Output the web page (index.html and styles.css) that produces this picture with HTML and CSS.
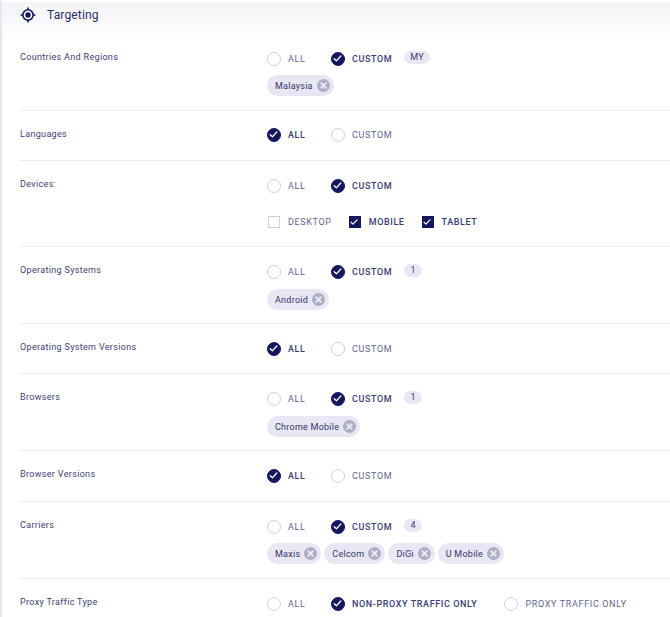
FILE: index.html
```html
<!DOCTYPE html>
<html lang="en">
<head>
<meta charset="utf-8">
<title>Targeting</title>
<link rel="stylesheet" href="styles.css">
</head>
<body>
<svg class="defs" width="0" height="0" aria-hidden="true">
  <symbol id="chk" viewBox="0 0 14 14"><path d="M2.8 7.4 5.6 10 11.2 3.9" fill="none" stroke="#fff" stroke-width="1.7" stroke-linecap="round" stroke-linejoin="round"/></symbol>
  <symbol id="x" viewBox="0 0 12 12"><circle cx="6" cy="6" r="6" fill="#aeadc4"/><path d="M3.9 3.9 8.1 8.1M8.1 3.9 3.9 8.1" stroke="#e8e7f3" stroke-width="1.8" stroke-linecap="round"/></symbol>
</svg>
<main class="panel">
  <header class="head">
    <svg class="target" viewBox="0 0 16 16" width="16" height="16"><circle cx="8" cy="8" r="5.2" fill="none" stroke="#15175c" stroke-width="1.6"/><circle cx="8" cy="8" r="2.7" fill="#15175c"/><path d="M8 .5v2.6M8 12.9v2.6M.5 8h2.6M12.9 8h2.6" stroke="#15175c" stroke-width="1.6"/></svg>
    <h2>Targeting</h2>
  </header>

  <section class="row">
    <div class="label">Countries And Regions</div>
    <div class="body">
      <div class="opts">
        <span class="opt w-all"><i class="radio"></i><b>ALL</b></span>
        <span class="opt on"><i class="radio"><svg><use href="#chk"/></svg></i><b>CUSTOM</b></span>
        <span class="count">MY</span>
      </div>
      <div class="chips"><span class="chip">Malaysia<svg><use href="#x"/></svg></span></div>
    </div>
  </section>

  <section class="row tight">
    <div class="label">Languages</div>
    <div class="body">
      <div class="opts">
        <span class="opt w-all on"><i class="radio"><svg><use href="#chk"/></svg></i><b>ALL</b></span>
        <span class="opt"><i class="radio"></i><b>CUSTOM</b></span>
      </div>
    </div>
  </section>

  <section class="row devices">
    <div class="label">Devices:</div>
    <div class="body">
      <div class="opts">
        <span class="opt w-all"><i class="radio"></i><b>ALL</b></span>
        <span class="opt on"><i class="radio"><svg><use href="#chk"/></svg></i><b>CUSTOM</b></span>
      </div>
      <div class="boxes">
        <span class="opt box-opt"><i class="box"></i><b>DESKTOP</b></span>
        <span class="opt box-opt on"><i class="box"><svg><use href="#chk"/></svg></i><b>MOBILE</b></span>
        <span class="opt box-opt on"><i class="box"><svg><use href="#chk"/></svg></i><b>TABLET</b></span>
      </div>
    </div>
  </section>

  <section class="row">
    <div class="label">Operating Systems</div>
    <div class="body">
      <div class="opts">
        <span class="opt w-all"><i class="radio"></i><b>ALL</b></span>
        <span class="opt on"><i class="radio"><svg><use href="#chk"/></svg></i><b>CUSTOM</b></span>
        <span class="count">1</span>
      </div>
      <div class="chips low"><span class="chip">Android<svg><use href="#x"/></svg></span></div>
    </div>
  </section>

  <section class="row">
    <div class="label">Operating System Versions</div>
    <div class="body">
      <div class="opts">
        <span class="opt w-all on"><i class="radio"><svg><use href="#chk"/></svg></i><b>ALL</b></span>
        <span class="opt"><i class="radio"></i><b>CUSTOM</b></span>
      </div>
    </div>
  </section>

  <section class="row">
    <div class="label">Browsers</div>
    <div class="body">
      <div class="opts">
        <span class="opt w-all"><i class="radio"></i><b>ALL</b></span>
        <span class="opt on"><i class="radio"><svg><use href="#chk"/></svg></i><b>CUSTOM</b></span>
        <span class="count">1</span>
      </div>
      <div class="chips low"><span class="chip">Chrome Mobile<svg><use href="#x"/></svg></span></div>
    </div>
  </section>

  <section class="row roomy">
    <div class="label">Browser Versions</div>
    <div class="body">
      <div class="opts">
        <span class="opt w-all on"><i class="radio"><svg><use href="#chk"/></svg></i><b>ALL</b></span>
        <span class="opt"><i class="radio"></i><b>CUSTOM</b></span>
      </div>
    </div>
  </section>

  <section class="row">
    <div class="label">Carriers</div>
    <div class="body">
      <div class="opts">
        <span class="opt w-all"><i class="radio"></i><b>ALL</b></span>
        <span class="opt on"><i class="radio"><svg><use href="#chk"/></svg></i><b>CUSTOM</b></span>
        <span class="count">4</span>
      </div>
      <div class="chips">
        <span class="chip">Maxis<svg><use href="#x"/></svg></span>
        <span class="chip">Celcom<svg><use href="#x"/></svg></span>
        <span class="chip">DiGi<svg><use href="#x"/></svg></span>
        <span class="chip">U Mobile<svg><use href="#x"/></svg></span>
      </div>
    </div>
  </section>

  <section class="row last">
    <div class="label">Proxy Traffic Type</div>
    <div class="body">
      <div class="opts">
        <span class="opt w-all"><i class="radio"></i><b>ALL</b></span>
        <span class="opt on wide"><i class="radio"><svg><use href="#chk"/></svg></i><b>NON-PROXY TRAFFIC ONLY</b></span>
        <span class="opt"><i class="radio"></i><b>PROXY TRAFFIC ONLY</b></span>
      </div>
    </div>
  </section>
</main>
</body>
</html>
```

FILE: styles.css
```css
* { box-sizing: border-box; }
html, body { margin: 0; height: 100%; }
body {
  background: #fff;
  font-family: Roboto, "Liberation Sans", sans-serif;
  color: #15175c;
  overflow: hidden;
}
.defs { position: absolute; }
.panel {
  height: 617px;
  border-left: 2px solid #e6e6f5;
  overflow: hidden;
}
.head {
  height: 32px;
  margin-top: 2px;
  padding: 0 0 6px 18px;
  display: flex;
  align-items: center;
  gap: 11px;
  background: linear-gradient(#f3f4f6, #fdfdfe);
}
.target { flex: none; }
.head h2 {
  margin: 0;
  font-size: 12px;
  font-weight: 400;
  letter-spacing: .15px;
  color: #2a2c68;
}
.row {
  margin-left: 18px;
  padding: 15px 0 14px;
  display: flex;
  border-bottom: 1px solid #eeeef3;
}
.row.tight { padding: 14px 0 15px; }
.row.tight .label { padding-top: 3px; }
.row.roomy { padding-bottom: 15px; }
.row.last { border-bottom: 0; }
.label {
  width: 247px;
  flex: none;
  padding-top: 2px;
  font-size: 9px;
  line-height: 13px;
  letter-spacing: .33px;
  color: #3f4070;
}
.opts {
  height: 20px;
  display: flex;
  align-items: center;
}
.opt {
  display: inline-flex;
  align-items: center;
  margin-right: 19px;
}
.opt.w-all { width: 45px; margin-right: 19px; }
.opt.wide { margin-right: 27px; }
.opt b {
  font-size: 9px;
  font-weight: 400;
  letter-spacing: .65px;
  color: #63648c;
  white-space: nowrap;
}
.opt.on b { font-weight: 500; letter-spacing: .6px; color: #3a3b72; }
.radio {
  width: 14px;
  height: 14px;
  margin-right: 7px;
  flex: none;
  border: 1.5px solid #cfcfe2;
  border-radius: 50%;
  display: block;
}
.on .radio { background: #15175c; border-color: #15175c; }
.radio svg { width: 11px; height: 11px; display: block; }
.count {
  height: 13px;
  min-width: 18px;
  margin: -3px 0 0 -7px;
  padding: 0 6px;
  border-radius: 7px;
  background: #e8e7f3;
  font-size: 9px;
  line-height: 13px;
  letter-spacing: .3px;
  text-align: center;
  color: #3d3e70;
}
.chips {
  margin-top: 6px;
  display: flex;
  gap: 3px;
}
.chips.low { margin: 7px 0 -1px; }
.chip {
  height: 21px;
  padding: 0 4px 0 8px;
  display: inline-flex;
  align-items: center;
  gap: 4px;
  border-radius: 11px;
  background: #e8e7f3;
  font-size: 9px;
  letter-spacing: .25px;
  color: #34356b;
}
.chip svg { width: 13px; height: 13px; flex: none; }
.boxes {
  margin-top: 16px;
  height: 20px;
  display: flex;
  align-items: center;
  padding-left: 1px;
}
.box-opt { margin-right: 17px; }
.box {
  width: 12px;
  height: 12px;
  margin-right: 8px;
  flex: none;
  display: block;
  border: 1.5px solid #cfcfe2;
}
.box-opt.on .box { background: #15175c; border-color: #15175c; }
.box svg { width: 10px; height: 10px; display: block; margin: -.5px; }
```
